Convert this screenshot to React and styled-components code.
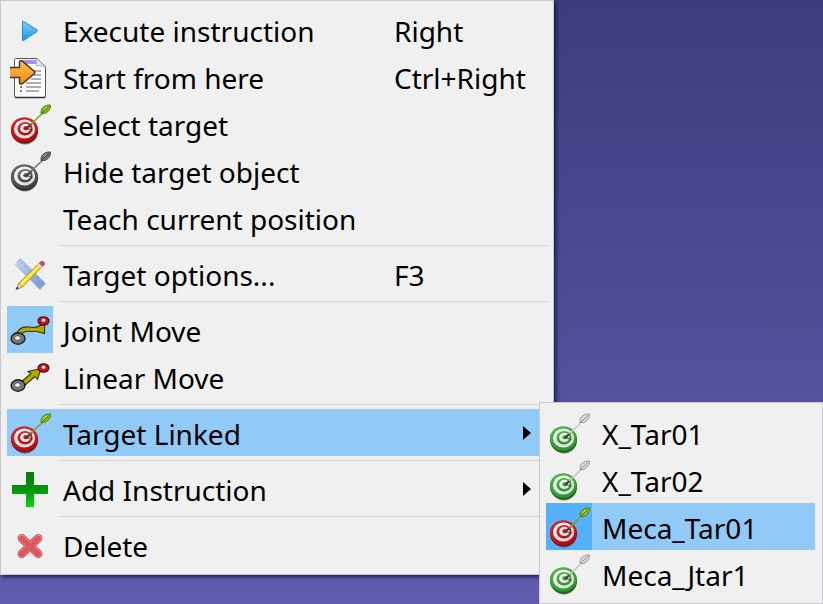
import React from 'react';
import styled, { createGlobalStyle } from 'styled-components';

const GlobalStyle = createGlobalStyle`
  * {
    box-sizing: border-box;
  }

  body {
    margin: 0;
    background: #3e3b7e;
  }
`;

// 3D view behind the menu
const Viewport = styled.main`
  min-height: 100vh;
  background: linear-gradient(#3e3b7e, #605dae);
  font-family: 'Noto Sans', 'Open Sans', sans-serif;
  overflow: hidden;
`;

const Menu = styled.div`
  width: 554px;
  padding: 5px 6px 6px;
  background: #f0f0f0;
  border: 1px solid #c8c8cc;
  box-shadow: 2px 2px 4px rgba(10, 8, 50, 0.75);
`;

const SubMenu = styled.div`
  position: absolute;
  top: -7px;
  left: 532px;
  width: 284px;
  padding: 6px 7px 6px 6px;
  background: #f0f0f0;
  border: 1px solid #c8c8cc;
`;

// Anchors a submenu to its parent item
const SubMenuAnchor = styled.div`
  position: relative;
`;

const Item = styled.button`
  display: flex;
  align-items: center;
  width: 100%;
  height: 47px;
  padding: 0;
  border: 0;
  background: ${({ $active }) => ($active ? '#91c9f7' : 'transparent')};
  color: #000;
  font: inherit;
  font-size: 28px;
  line-height: 40px;
  text-align: left;
  white-space: nowrap;
`;

const IconCell = styled.span`
  flex: none;
  width: 46px;
  height: 100%;
  background: ${({ $fill }) => $fill || 'transparent'};

  svg {
    display: block;
  }
`;

const Label = styled.span`
  flex: 1;
  padding: 3px 0 0 10px;
`;

const Shortcut = styled.span`
  width: 153px;
  padding-top: 3px;
`;

const Arrow = styled.svg`
  margin-right: 16px;
`;

const Separator = styled.hr`
  height: 1px;
  margin: 4px 0 4px 52px;
  border: 0;
  background: #d5d5d5;
`;

const Icon = ({ children }) => (
  <svg width="46" height="46" viewBox="0 0 46 46" aria-hidden="true">
    {children}
  </svg>
);

const PlayIcon = () => (
  <Icon>
    <defs>
      <linearGradient id="play" x1="0" y1="0" x2="0" y2="1">
        <stop offset="0" stopColor="#7fd4f8" />
        <stop offset="1" stopColor="#1c94e0" />
      </linearGradient>
    </defs>
    <path d="M15.5 15.5 Q15.5 14.8 16.5 15.3 L30 24 Q31 24.8 30 25.5 L16.5 34.6 Q15.5 35 15.5 34Z" fill="url(#play)" stroke="#2387c6" />
  </Icon>
);

const StartIcon = () => (
  <Icon>
    <defs>
      <linearGradient id="start" x1="0" y1="0" x2="0" y2="1">
        <stop offset="0" stopColor="#ffbd50" />
        <stop offset="1" stopColor="#f58a12" />
      </linearGradient>
    </defs>
    <path d="M8.5 5.5H30L38.5 14V43Q38.5 44.5 37 44.5H9Q7.5 44.5 7.5 43V6.5Q7.5 5.5 8.5 5.5Z" fill="#fdfdff" stroke="#555" />
    <path d="M8 44.5H38" stroke="#333" strokeWidth="1.5" />
    <path d="M15 7H29L30 11H17Z" fill="#b28cf5" />
    <path d="M30 5.5L29 13Q34 12 38.5 14Z" fill="#e4e4ea" stroke="#999" strokeWidth=".7" />
    <path d="M25 18H34M27 22H34M24 26H34M19 30H34M19 34H34M19 38H32" stroke="#92929a" strokeWidth="1.4" />
    <path d="M13 34H15M13 38H15M13 30H15" stroke="#555" strokeWidth="1.5" />
    <path d="M3 14.5H12.5V8.5Q13 7 15 8L27.5 18.5Q28.3 19.5 27.5 20.5L15 31Q12.5 31.5 12.5 29.5V24.5H3Z" fill="url(#start)" />
    <path d="M3 14.5H12.5V8.5Q13 7 15 8L27.5 18.5Q28.3 19.5 27.5 20.5L15 31Q12.5 31.5 12.5 29.5V24.5H3" fill="none" stroke="#40382c" strokeWidth="1.5" />
  </Icon>
);

const targetColors = {
  red: { ring: '#e0262c', dark: '#bb0c14', edge: '#7c1014', shaft: '#7da019', fin: '#8cc012', finEdge: '#47700a' },
  gray: { ring: '#707070', dark: '#444', edge: '#2c2c2c', shaft: '#777', fin: '#777', finEdge: '#333' },
  green: { ring: '#4cbc48', dark: '#269a2c', edge: '#1f5f22', shaft: '#c5c5c5', fin: '#d8d8d8', finEdge: '#8b8b8b' },
};

const TargetIcon = ({ color }) => {
  const c = targetColors[color];
  const ring = `url(#ring-${color})`;
  const face = `url(#face-${color})`;
  return (
    <Icon>
      <defs>
        <linearGradient id={`ring-${color}`} x1="0" y1="0" x2=".4" y2="1">
          <stop offset="0" stopColor={c.ring} />
          <stop offset="1" stopColor={c.dark} />
        </linearGradient>
        <linearGradient id={`face-${color}`} x1="0" y1="0" x2="1" y2=".8">
          <stop offset="0" stopColor="#fff" />
          <stop offset="1" stopColor="#dcd6d2" />
        </linearGradient>
      </defs>
      <ellipse cx="18" cy="32" rx="12.8" ry="12.5" fill="#555" opacity=".8" />
      <ellipse cx="17.5" cy="30.7" rx="13.5" ry="12.7" fill={c.edge} />
      <ellipse cx="17.3" cy="29.5" rx="13.4" ry="12.3" fill={ring} />
      <ellipse cx="17.6" cy="29" rx="10.6" ry="9.6" fill={face} />
      <ellipse cx="18" cy="28.7" rx="7.6" ry="6.7" fill={ring} />
      <ellipse cx="18.4" cy="28.4" rx="5.2" ry="4.6" fill={face} />
      <ellipse cx="18.8" cy="28.2" rx="2.5" ry="2.1" fill={ring} />
      <path d="M20 28.5L25.5 30.5" stroke="#333" strokeWidth="1.5" opacity=".55" />
      <path d="M19 29L25 23.5" stroke="#3a3f32" strokeWidth="2" />
      <path d="M23 25L38 11" stroke={c.shaft} strokeWidth="1.6" />
      <path d="M34 13.5Q33.500 8 38 6Q41 4.500 43.500 5Q44 9 41 11.500Q38 14.500 34 13.500Z" fill={c.fin} stroke={c.finEdge} strokeWidth=".8" />
      <path d="M35 13L42 6.5" stroke={c.finEdge} strokeWidth="1" />
      <path d="M37 9.5L40 7" stroke="#eee" opacity=".6" />
    </Icon>
  );
};

const OptionsIcon = () => (
  <Icon>
    <defs>
      <linearGradient id="ruler" x1="0" y1="0" x2="1" y2="1">
        <stop offset="0" stopColor="#c8d9f0" />
        <stop offset="1" stopColor="#6f94c9" />
      </linearGradient>
    </defs>
    <path d="M8 14.5L13.5 8.5L38.5 33.5L33 39.5Z" fill="url(#ruler)" stroke="#9bb1d0" strokeWidth=".7" />
    <path d="M13 9.5L11.5 11.5M16 12L14 14M19 15L17.5 17M31 27L29 29M34 30L32 32M36.5 33L34.5 35" stroke="#7892b8" strokeWidth=".8" />
    <path d="M9 39.5L12 33L34 11.5Q37 11 37.5 14L15.5 37Z" fill="#f3d72d" stroke="#9c7f20" strokeWidth=".8" />
    <path d="M13.5 34.5L35 13.2" stroke="#fff28a" strokeWidth="1.3" />
    <path d="M9 39.5L12 33L15.5 37Z" fill="#ecd2a8" stroke="#a78350" strokeWidth=".6" />
    <path d="M9 39.5L10.3 36.8L11.8 38.3Z" fill="#222" />
    <path d="M32 13.5L34.5 11Q38 11 37.8 14.5L35.5 17Z" fill="#c9436d" />
    <path d="M31.5 14L35 17.5" stroke="#ddd" strokeWidth="1.5" />
  </Icon>
);

const MoveEnds = () => (
  <>
    <ellipse cx="11" cy="32.5" rx="6.9" ry="5.7" fill="#77777b" stroke="#1c1c1c" strokeWidth="1.4" />
    <ellipse cx="10.5" cy="32" rx="2.8" ry="2.1" fill="#fff" stroke="#444" strokeWidth=".6" />
    <ellipse cx="36.5" cy="15" rx="5.5" ry="4.2" fill="#c8101e" stroke="#59050b" strokeWidth="1.1" />
    <ellipse cx="36.5" cy="14.2" rx="1.8" ry="1.6" fill="#fff" />
  </>
);

const JointIcon = () => (
  <Icon>
    <path d="M9 30Q11 20 22 21Q29 22.5 34 19L37.5 17.5V27.5L29.5 25.5Q24 25.5 20 25.5Q14 26 12 31Z" fill="#b0a800" stroke="#373500" strokeWidth="1.1" />
    <MoveEnds />
  </Icon>
);

const LinearIcon = () => (
  <Icon>
    <path d="M13 30L24 20.5L21 18.5L34 15.5L30.5 26.5L28 23.5L17 33Z" fill="#b0a800" stroke="#373500" strokeWidth="1.1" />
    <MoveEnds />
  </Icon>
);

const PlusIcon = () => (
  <Icon>
    <defs>
      <linearGradient id="plus" x1="0" y1="0" x2="0" y2="1">
        <stop offset="0" stopColor="#087b08" />
        <stop offset=".5" stopColor="#07940b" />
        <stop offset="1" stopColor="#03d80b" />
      </linearGradient>
    </defs>
    <path d="M19 7H27V20H41V29H27V42H19V29H5V20H19Z" fill="url(#plus)" />
    <path d="M5.5 29V20.5H19.5V7.5H26.5" fill="none" stroke="#087108" opacity=".5" />
  </Icon>
);

const DeleteIcon = () => (
  <Icon>
    <g strokeLinecap="round">
      <path d="M14.8 17.2L31.2 32.8M31.2 17.2L14.8 32.8" stroke="#c0404a" strokeWidth="8.4" />
      <path d="M14.8 17.2L31.2 32.8M31.2 17.2L14.8 32.8" stroke="#ea9090" strokeWidth="6.8" />
      <path d="M14.8 17.5L31.2 33M31.2 17.5L14.8 33" stroke="#dc5860" strokeWidth="5.4" />
    </g>
  </Icon>
);

const MenuItem = ({ icon, label, shortcut, active, iconFill, hasSubmenu }) => (
  <Item type="button" role="menuitem" $active={active} aria-haspopup={hasSubmenu ? 'menu' : undefined}>
    <IconCell $fill={iconFill}>{icon}</IconCell>
    <Label>{label}</Label>
    {shortcut && <Shortcut>{shortcut}</Shortcut>}
    {hasSubmenu && (
      <Arrow width="8" height="14" viewBox="0 0 8 14" aria-hidden="true">
        <path d="M0 0L8 7L0 14Z" />
      </Arrow>
    )}
  </Item>
);

export default function App() {
  return (
    <Viewport>
      <GlobalStyle />
      <Menu role="menu">
        <MenuItem icon={<PlayIcon />} label="Execute instruction" shortcut="Right" />
        <MenuItem icon={<StartIcon />} label="Start from here" shortcut="Ctrl+Right" />
        <MenuItem icon={<TargetIcon color="red" />} label="Select target" />
        <MenuItem icon={<TargetIcon color="gray" />} label="Hide target object" />
        <MenuItem label="Teach current position" />
        <Separator />
        <MenuItem icon={<OptionsIcon />} label="Target options..." shortcut="F3" />
        <Separator />
        <MenuItem icon={<JointIcon />} label="Joint Move" iconFill="#91c9f7" />
        <MenuItem icon={<LinearIcon />} label="Linear Move" />
        <Separator />
        <SubMenuAnchor>
          <MenuItem icon={<TargetIcon color="red" />} label="Target Linked" active hasSubmenu />
          <SubMenu role="menu">
            <MenuItem icon={<TargetIcon color="green" />} label="X_Tar01" />
            <MenuItem icon={<TargetIcon color="green" />} label="X_Tar02" />
            <MenuItem icon={<TargetIcon color="red" />} label="Meca_Tar01" active iconFill="#56b0fa" />
            <MenuItem icon={<TargetIcon color="green" />} label="Meca_Jtar1" />
          </SubMenu>
        </SubMenuAnchor>
        <Separator />
        <MenuItem icon={<PlusIcon />} label="Add Instruction" hasSubmenu />
        <Separator />
        <MenuItem icon={<DeleteIcon />} label="Delete" />
      </Menu>
    </Viewport>
  );
}
